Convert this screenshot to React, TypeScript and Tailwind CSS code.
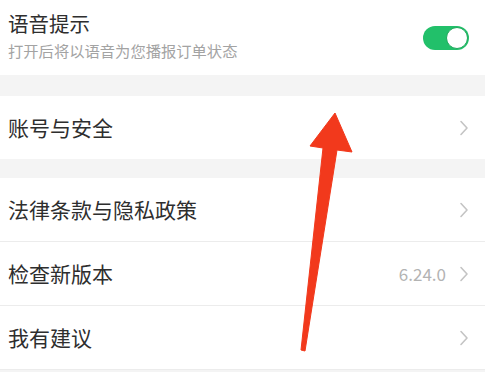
import React, { useState } from 'react';

const FONT = { fontFamily: '"Noto Sans CJK SC", "Noto Sans", sans-serif' };

function Chevron() {
  return (
    <svg width="10" height="16" viewBox="0 0 10 16" className="shrink-0">
      <path d="M2 1.5 L8 8 L2 14.5" fill="none" stroke="#c4c4c4" strokeWidth="1.6" strokeLinecap="round" strokeLinejoin="round" />
    </svg>
  );
}

function Row({ label, value, divider = true, h = 'h-[64px]' }: { label: string; value?: string; divider?: boolean; h?: string }) {
  return (
    <div className={`flex items-center justify-between bg-white pl-2 pr-[16px] ${h} ${divider ? 'border-b border-[#ececec]' : ''}`}>
      <span className="text-[21px] text-[#2e2e2e] leading-none">{label}</span>
      <div className="flex items-center gap-[13px]">
        {value && <span className="text-[17px] text-[#b3b3b3] leading-none">{value}</span>}
        <Chevron />
      </div>
    </div>
  );
}

export default function App() {
  const [voiceOn, setVoiceOn] = useState(true);

  return (
    <div className="relative w-[485px] h-[372px] overflow-hidden bg-[#f4f4f4]" style={FONT}>
      {/* voice prompt */}
      <div className="flex items-center justify-between bg-white pl-2 pr-[16px] h-[75px]">
        <div className="flex flex-col gap-[9px] -mt-[4px]">
          <span className="text-[20.5px] text-[#2e2e2e] leading-none">语音提示</span>
          <span className="text-[15.3px] text-[#a3a3a3] leading-none">打开后将以语音为您播报订单状态</span>
        </div>
        <button
          onClick={() => setVoiceOn(!voiceOn)}
          className={`relative w-[46px] h-[24px] rounded-full ${voiceOn ? 'bg-[#22c06a]' : 'bg-[#dcdcdc]'}`}
        >
          <span
            className={`absolute top-[1px] w-[22px] h-[22px] rounded-full bg-white border border-[#1fa85c] ${voiceOn ? 'right-[1px]' : 'left-[1px]'}`}
          />
        </button>
      </div>

      <div className="h-[21px]" />
      <Row label="账号与安全" divider={false} h="h-[63px]" />
      <div className="h-[19px]" />
      <Row label="法律条款与隐私政策" />
      <Row label="检查新版本" value="6.24.0" />
      <Row label="我有建议" />

      {/* red annotation arrow */}
      <svg className="absolute left-0 top-0 pointer-events-none" width="485" height="372" viewBox="0 0 485 372">
        <polygon
          points="335,113 352,152 337,150 305,351 301,350 323,148 310,146"
          fill="#f2391c"
          stroke="#f2391c"
          strokeWidth="1"
          strokeLinejoin="round"
        />
      </svg>
    </div>
  );
}
